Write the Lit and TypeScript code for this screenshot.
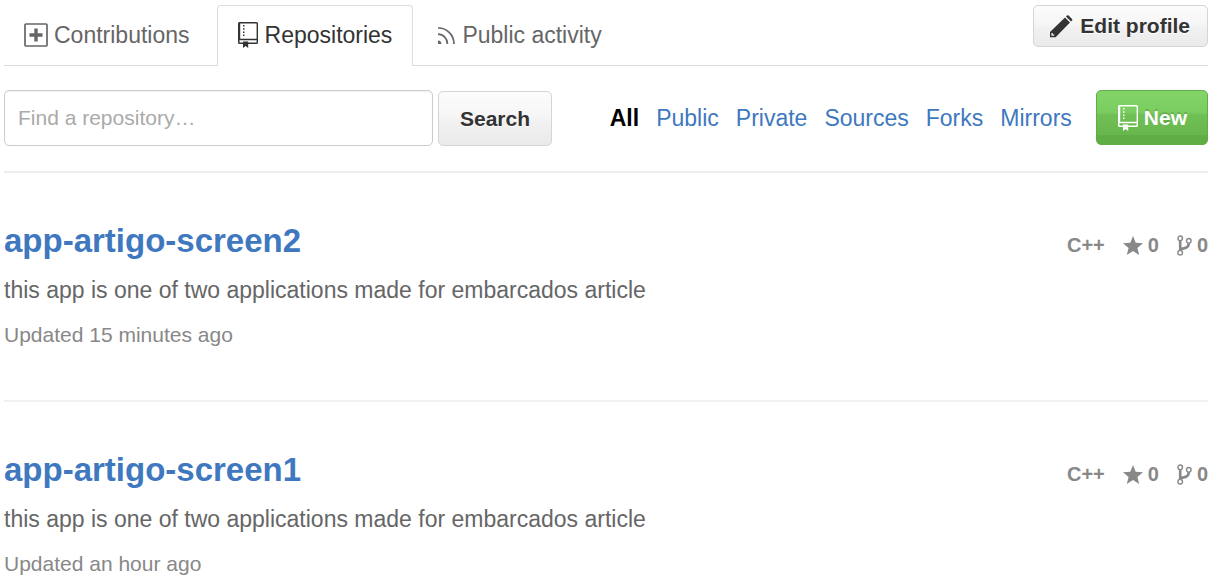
import { LitElement, html, svg, css } from "lit";
import { customElement, property, state } from "lit/decorators.js";
import { classMap } from "lit/directives/class-map.js";

type Repo = { name: string; description: string; language: string; stars: number; forks: number; updated: string };

const repos: Repo[] = [
  {
    name: "app-artigo-screen2",
    description: "this app is one of two applications made for embarcados article",
    language: "C++",
    stars: 0,
    forks: 0,
    updated: "15 minutes ago",
  },
  {
    name: "app-artigo-screen1",
    description: "this app is one of two applications made for embarcados article",
    language: "C++",
    stars: 0,
    forks: 0,
    updated: "an hour ago",
  },
];

const filters = ["All", "Public", "Private", "Sources", "Forks", "Mirrors"];

const shapes = {
  plus: {
    w: 24,
    h: 24,
    body: svg`<rect x="1" y="1" width="22" height="22" rx="1" fill="none" stroke="currentColor" stroke-width="1.7"/>
      <path d="M10.300 5.500h3.400v4.800h4.800v3.400h-4.800v4.800h-3.400v-4.800H5.500v-3.400h4.800z" fill="currentColor"/>`,
  },
  repo: {
    w: 20,
    h: 26,
    body: svg`<path fill="currentColor" fill-rule="evenodd" d="M1.500 0h17A1.500 1.500 0 0 1 20 1.500v19a1.500 1.500 0 0 1-1.500 1.500h-17A1.500 1.500 0 0 1 0 20.500v-19A1.500 1.500 0 0 1 1.500 0zM2.200 1.500v15.300h16.400V1.500zM1.500 18.200v2.400h17.100v-2.400z"/>
      <path fill="currentColor" d="M5 19.400h5.200V26l-2.600-2L5 26z"/>
      <path fill="currentColor" d="M5 3h1.500v1.500H5zM5 6.200h1.500v1.500H5zM5 9.400h1.500v1.500H5zM5 12.600h1.500v1.500H5z"/>`,
  },
  rss: {
    w: 17,
    h: 17,
    body: svg`<path d="M0 1a15.500 15.500 0 0 1 15.900 16M0 7.200A9.500 9.500 0 0 1 9.400 17" fill="none" stroke="currentColor" stroke-width="1.700"/>
      <path d="M0 13.500A3.500 3.500 0 0 1 3.400 17H0z" fill="currentColor"/>`,
  },
  pencil: {
    w: 23,
    h: 23,
    body: svg`<path fill="currentColor" fill-rule="evenodd" d="M15 2.500l5 5L5.600 22.200H0V17zM1.400 17.900v2.900h2.900v-1.400H2.900v-1.500z"/>
      <path fill="currentColor" d="M16 1.500l1-1q.8-.7 1.600 0l3.400 3.400q.7.800 0 1.600l-1 1z"/>`,
  },
  star: {
    w: 20,
    h: 19,
    body: svg`<path fill="currentColor" d="M10 0l2.700 6.700 7.300.6-5.600 4.600L16.200 19 10 15.100 3.800 19l1.800-7.100L0 7.300l7.300-.6z"/>`,
  },
  fork: {
    w: 15,
    h: 21,
    body: svg`<g fill="none" stroke="currentColor" stroke-width="1.400"><circle cx="3.200" cy="3.300" r="2.300"/><circle cx="11.800" cy="5.800" r="2.300"/><circle cx="3.200" cy="17.700" r="2.300"/></g>
      <path d="M3.200 5.600v9.800M11.800 8.100c0 4.200-2.500 5-5 5.300-2 .3-3.600.9-3.600 2.200" fill="none" stroke="currentColor" stroke-width="2.600"/>`,
  },
};

type IconName = keyof typeof shapes;

const icon = (name: IconName) => {
  const { w, h, body } = shapes[name];
  return html`<svg class="icon" width=${w} height=${h} viewBox="0 0 ${w} ${h}" aria-hidden="true">${body}</svg>`;
};

@customElement("repo-item")
class RepoItem extends LitElement {
  @property({ attribute: false }) repo!: Repo;

  static styles = css`
    :host {
      display: block;
    }
    .item {
      display: flex;
      justify-content: space-between;
      align-items: flex-start;
      gap: 24px;
      padding-top: 48px;
    }
    .name {
      margin: 0 0 14px;
      font-size: 33px;
      line-height: 40px;
    }
    .name a {
      color: #4078c0;
      text-decoration: none;
    }
    .description {
      margin: 0 0 15px;
      font-size: 23px;
      line-height: 30px;
      color: #666;
    }
    .updated {
      margin: 0;
      font-size: 21px;
      line-height: 30px;
      color: #888;
    }
    .stats {
      display: flex;
      align-items: center;
      gap: 18px;
      padding-top: 9px;
      font-size: 20px;
      line-height: 30px;
      font-weight: bold;
      color: #888;
    }
    .stat {
      display: flex;
      align-items: center;
      gap: 5px;
      color: inherit;
      text-decoration: none;
    }
  `;

  render() {
    const r = this.repo;
    return html`<article class="item">
      <div>
        <h3 class="name"><a href="#${r.name}">${r.name}</a></h3>
        <p class="description">${r.description}</p>
        <p class="updated">Updated ${r.updated}</p>
      </div>
      <div class="stats">
        <span>${r.language}</span>
        <a class="stat" href="#stars" aria-label="Stars">${icon("star")}<span>${r.stars}</span></a>
        <a class="stat" href="#forks" aria-label="Forks">${icon("fork")}<span>${r.forks}</span></a>
      </div>
    </article>`;
  }
}

@customElement("app-root")
class AppRoot extends LitElement {
  @state() private filter = "All";

  static styles = css`
    :host {
      display: block;
      padding: 0 10px 0 4px;
      font-family: "Liberation Sans", Arial, sans-serif;
      background: #fff;
      color: #333;
    }
    * {
      box-sizing: border-box;
    }
    .header {
      display: flex;
      justify-content: space-between;
      align-items: flex-start;
      padding-top: 5px;
      border-bottom: 1px solid #ddd;
    }
    .tabs {
      display: flex;
      margin-bottom: -1px;
    }
    .tab {
      display: flex;
      align-items: center;
      gap: 7px;
      height: 61px;
      padding: 0 20px 2px;
      border: 1px solid transparent;
      border-bottom: 0;
      font-size: 23px;
      color: #666;
      text-decoration: none;
    }
    .tab.first {
      gap: 6px;
      padding-right: 26px;
      padding-left: 19px;
    }
    .tab.last {
      padding-left: 24px;
    }
    .tab.selected {
      border-color: #ddd;
      border-radius: 4px 4px 0 0;
      background: #fff;
      color: #333;
    }
    .button {
      display: flex;
      align-items: center;
      justify-content: center;
      border: 1px solid #d5d5d5;
      border-radius: 5px;
      background: linear-gradient(#fcfcfc, #f6f6f6 45%, #f1f1f1 55%, #eaeaea);
      font: bold 21px "Liberation Sans", Arial, sans-serif;
      color: #333;
      text-shadow: 0 1px 0 #fff;
      white-space: nowrap;
    }
    .edit {
      gap: 7px;
      height: 42px;
      padding: 0 17px 0 16px;
    }
    .toolbar {
      display: flex;
      justify-content: space-between;
      align-items: center;
      gap: 24px;
      padding: 24px 0 25px;
      border-bottom: 2px solid #eee;
    }
    .search {
      display: flex;
      flex: 0 1 548px;
      align-items: flex-end;
      gap: 5px;
    }
    .field {
      flex: 1;
      min-width: 0;
      height: 56px;
      padding: 0 13px;
      border: 1px solid #ccc;
      border-radius: 5px;
      box-shadow: inset 0 1px 2px rgba(0, 0, 0, 0.06);
      font: 21px "Liberation Sans", Arial, sans-serif;
      color: #333;
    }
    .field::placeholder {
      color: #aaa;
      opacity: 1;
    }
    .go {
      height: 55px;
      padding: 0 21px;
    }
    .actions {
      display: flex;
      align-items: flex-start;
      height: 56px;
      gap: 24px;
    }
    .filters {
      display: flex;
      gap: 17px;
      font-size: 23px;
      line-height: 56px;
    }
    .filter {
      color: #4078c0;
      text-decoration: none;
    }
    .filter.active {
      color: #000;
      font-weight: bold;
    }
    .new {
      gap: 6px;
      height: 55px;
      padding: 0 20px 0 21px;
      border-color: #5fad46;
      background: linear-gradient(#84d568, #7bcc60 42%, #70c155 43%, #68b64e 83%, #60ad45 84%, #60ad45);
      color: #fff;
      text-shadow: 0 -2px 0 rgba(0, 0, 0, 0.15);
    }
    .list {
      margin: 0;
      padding: 0;
      list-style: none;
    }
    .row + .row {
      margin-top: 50px;
      border-top: 2px solid #f1f1f1;
    }
  `;

  render() {
    return html`
      <header class="header">
        <nav class="tabs">
          <a class="tab first" href="#contributions">${icon("plus")}Contributions</a>
          <a class="tab selected" href="#repositories" aria-current="page">${icon("repo")}Repositories</a>
          <a class="tab last" href="#activity">${icon("rss")}Public activity</a>
        </nav>
        <button class="button edit" type="button">${icon("pencil")}Edit profile</button>
      </header>
      <div class="toolbar">
        <form class="search" @submit=${(e: Event) => e.preventDefault()}>
          <input class="field" type="text" aria-label="Find a repository" placeholder="Find a repository…" />
          <button class="button go" type="submit">Search</button>
        </form>
        <div class="actions">
          <nav class="filters">
            ${filters.map(
              (f) => html`<a
                class=${classMap({ filter: true, active: f === this.filter })}
                href="#${f.toLowerCase()}"
                @click=${() => (this.filter = f)}
                >${f}</a
              >`,
            )}
          </nav>
          <button class="button new" type="button">${icon("repo")}New</button>
        </div>
      </div>
      <ul class="list">
        ${repos.map((r) => html`<li class="row"><repo-item .repo=${r}></repo-item></li>`)}
      </ul>
    `;
  }
}
